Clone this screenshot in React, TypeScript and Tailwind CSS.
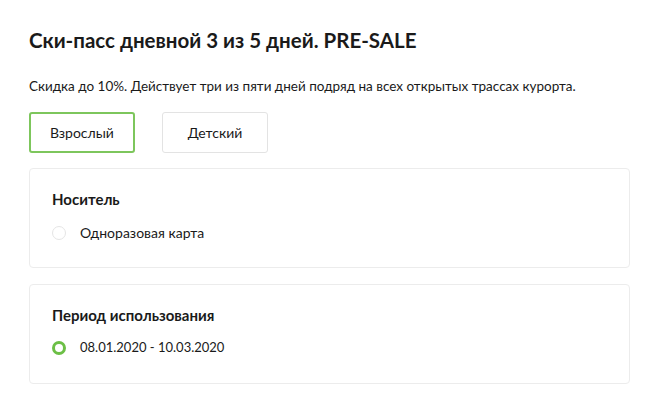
export default function App() {
  return (
    <div className="min-h-screen bg-white px-[29px] pt-[25px] text-[#1a1a1a]" style={{ fontFamily: 'Lato, "Open Sans", sans-serif' }}>
      <h1 className="text-[20.5px] leading-[30px] font-bold">Ски-пасс дневной 3 из 5 дней. PRE-SALE</h1>
      <p className="mt-[22px] text-[13.5px] leading-[18px]">
        Скидка до 10%. Действует три из пяти дней подряд на всех открытых трассах курорта.
      </p>
      <div className="mt-[17px] flex gap-[27px]">
        <button className="h-[41px] w-[106px] rounded-[3px] border-2 border-[#7dc65c] text-[14px]">Взрослый</button>
        <button className="h-[41px] w-[106px] rounded-[3px] border border-[#e3e3e3] text-[14px]">Детский</button>
      </div>
      <div className="mt-[15px] mr-[-9px] flex flex-col gap-[16px]">
        <div className="h-[100px] rounded-[4px] border border-[#ececec] px-[22px] pt-[20px]">
          <h2 className="text-[15px] leading-[20px] font-bold">Носитель</h2>
          <label className="mt-[13px] flex items-center gap-[14px] text-[14px]">
            <span className="h-[14px] w-[14px] rounded-full border border-[#e5e5e5]" />
            Одноразовая карта
          </label>
        </div>
        <div className="h-[100px] rounded-[4px] border border-[#ececec] px-[22px] pt-[20px]">
          <h2 className="text-[15px] leading-[20px] font-bold">Период использования</h2>
          <label className="mt-[13px] flex items-center gap-[14px] text-[13px]">
            <span className="h-[14px] w-[14px] rounded-full border-[3px] border-[#6cbf46]" />
            08.01.2020 - 10.03.2020
          </label>
        </div>
      </div>
    </div>
  )
}
